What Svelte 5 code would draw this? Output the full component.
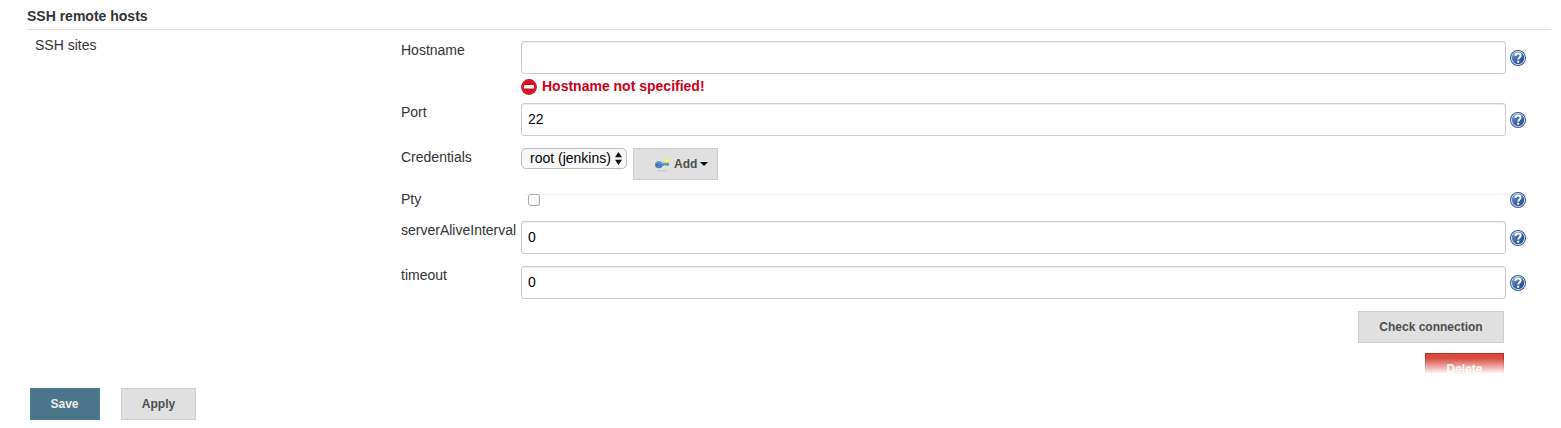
<script>
  let hostname = $state('');
  let port = $state('22');
  let interval = $state('0');
  let timeout = $state('0');
  let pty = $state(false);
</script>

{#snippet help()}
  <svg class="help" viewBox="0 0 16 16" role="img" aria-label="Help">
    <defs>
      <linearGradient id="help-blue" x1="0" y1="0" x2="1" y2="1">
        <stop offset="0" stop-color="#7f9fcd" />
        <stop offset="0.5" stop-color="#3f68a6" />
        <stop offset="1" stop-color="#1d4582" />
      </linearGradient>
    </defs>
    <circle cx="8" cy="8" r="8" fill="#30598f" />
    <circle cx="8" cy="8" r="7" fill="#e9f0f8" />
    <circle cx="8" cy="8" r="6.2" fill="url(#help-blue)" />
    <path d="M5.3 5.9C5.4 4.2 6.6 3.5 8.1 3.5c1.6 0 2.6.8 2.6 2.1 0 1.9-2.5 1.9-2.5 4" fill="none" stroke="#fff" stroke-width="1.9" />
    <rect x="7.1" y="10.7" width="2.1" height="2" fill="#fff" />
  </svg>
{/snippet}

<main>
  <h1>SSH remote hosts</h1>
  <div class="body">
    <div class="side">SSH sites</div>
    <div class="form">
      <div class="row host">
        <label for="hostname">Hostname</label>
        <div class="control">
          <input id="hostname" class="text" bind:value={hostname} />
          <div class="error">
            <svg width="16" height="16" viewBox="0 0 16 16">
              <circle cx="8" cy="8" r="7.9" fill="#b9101d" />
              <circle cx="8" cy="8" r="6.9" fill="#e62a37" />
              <circle cx="8" cy="8" r="6.2" fill="#df0a1b" />
              <rect x="3" y="6" width="10" height="3.6" rx=".5" fill="#fff" />
            </svg>
            <span>Hostname not specified!</span>
          </div>
        </div>
        {@render help()}
      </div>
      <div class="row port">
        <label for="port">Port</label>
        <input id="port" class="text" bind:value={port} />
        {@render help()}
      </div>
      <div class="row creds">
        <span class="label">Credentials</span>
        <div class="pick">
          <button class="select">
            <span>root (jenkins)</span>
            <svg width="7" height="13" viewBox="0 0 7 13"><path d="M0 5.3 3.5 0 7 5.3zM0 7.7h7L3.5 13z" fill="#111" /></svg>
          </button>
          <button class="btn add">
            <svg width="16" height="16" viewBox="0 0 16 16">
              <ellipse cx="8" cy="14.7" rx="5.5" ry=".8" fill="#cbcbcb" />
              <circle cx="12.6" cy="4.7" r="2.7" fill="#eee994" />
              <circle cx="12.6" cy="4.7" r="1.6" fill="#fff94a" />
              <path d="M7 6.8h7.6l.8 1.2-1.2 1.9h-1l-.8-.8-.9.8-.9-.8-1 .8H7z" fill="#5f8fc2" />
              <ellipse cx="4.8" cy="8.7" rx="3.8" ry="3.5" fill="#4a80bd" />
              <path d="M2.2 7.6c1-1.6 3.3-1.8 4.8-.3h7" fill="none" stroke="#7da9d6" stroke-width=".9" />
              <circle cx="2.9" cy="8.9" r=".8" fill="#315f94" />
            </svg>
            <span>Add</span>
            <svg class="caret" width="8" height="4" viewBox="0 0 8 4"><path d="M0 0h8L4 4z" fill="#000" /></svg>
          </button>
        </div>
      </div>
      <div class="row pty">
        <label for="pty">Pty</label>
        <div class="check"><input id="pty" type="checkbox" bind:checked={pty} /></div>
        {@render help()}
      </div>
      <div class="row field">
        <label for="interval">serverAliveInterval</label>
        <input id="interval" class="text" bind:value={interval} />
        {@render help()}
      </div>
      <div class="row field">
        <label for="timeout">timeout</label>
        <input id="timeout" class="text" bind:value={timeout} />
        {@render help()}
      </div>
      <div class="actions">
        <button class="btn connection">Check connection</button>
        <button class="btn delete">Delete</button>
      </div>
    </div>
  </div>
  <footer>
    <button class="btn save">Save</button>
    <button class="btn apply">Apply</button>
  </footer>
</main>

<style>
  :global(body) { background: #fff; }
  main {
    box-sizing: border-box;
    height: 428px;
    overflow: hidden;
    display: flex;
    flex-direction: column;
    font: 14px/18px "Liberation Sans", Helvetica, Arial, sans-serif;
    color: #333;
  }
  h1 {
    flex: none;
    box-sizing: border-box;
    height: 30px;
    margin: 0 10px 0 27px;
    padding-top: 7px;
    border-bottom: 1px solid #dcdcdc;
    font-size: 14px;
    line-height: 18px;
  }
  .body {
    position: relative;
    flex: none;
    height: 344px;
    overflow: hidden;
    display: grid;
    grid-template-columns: 366px 1125px;
    padding-left: 35px;
  }
  .body::after {
    content: "";
    position: absolute;
    inset: auto 0 0;
    height: 16px;
    background: linear-gradient(rgba(255, 255, 255, 0), #fff);
  }
  .side { padding-top: 6px; }
  .form { padding-top: 11px; }
  .row {
    display: grid;
    grid-template-columns: 120px 985px 16px;
    align-items: start;
  }
  .host { height: 62px; }
  .port, .field { height: 45px; }
  .creds { height: 42px; }
  .pty { height: 31px; }
  .row > label, .label { white-space: nowrap; }
  .help { width: 16px; height: 16px; margin: 9px 0 0 4px; }
  .text {
    box-sizing: border-box;
    display: block;
    width: 985px;
    height: 33px;
    margin: 0;
    padding: 0 6px 1px;
    border: 1px solid #ccc;
    border-radius: 3px;
    background: #fff;
    box-shadow: inset 0 1px 1px rgba(0, 0, 0, 0.075);
    font: inherit;
    color: #000;
    outline: 0;
  }
  .error {
    display: flex;
    align-items: center;
    gap: 5px;
    margin-top: 5px;
    height: 16px;
    color: #cc0018;
    font-weight: bold;
  }
  .error span { margin-top: -2px; }
  .pick { display: flex; align-items: flex-start; gap: 6px; }
  .select {
    box-sizing: border-box;
    display: flex;
    align-items: center;
    justify-content: space-between;
    width: 106px;
    height: 21px;
    padding: 0 4px 0 8px;
    border: 1px solid #bdbdbd;
    border-radius: 5px;
    background: linear-gradient(#f5f5f5, #fafafa);
    font: 14px/18px "Liberation Sans", Helvetica, Arial, sans-serif;
    color: #000;
    white-space: nowrap;
  }
  .select span { margin-top: -2px; }
  .select svg { flex: none; }
  .btn {
    box-sizing: border-box;
    display: flex;
    align-items: center;
    justify-content: center;
    height: 32px;
    margin: 0;
    padding: 0;
    border: 1px solid #ccc;
    background: #e0e0e0;
    color: #4d4d4d;
    font: bold 12px/16px "Liberation Sans", Helvetica, Arial, sans-serif;
  }
  .add { width: 85px; justify-content: flex-start; padding-left: 20px; }
  .add span { margin-left: 4px; }
  .caret { margin: 0 0 1px 3px; }
  .check {
    height: 12px;
    margin: 4px 0 0 4px;
    border-top: 1px solid #f0f0f0;
    width: 985px;
    display: flex;
  }
  .check input {
    appearance: none;
    box-sizing: border-box;
    width: 12px;
    height: 12px;
    margin: -1px 0 0 3px;
    border: 1px solid #a6a6a6;
    border-radius: 3px;
    background: #fff;
  }
  .pty .help { margin-top: 2px; }
  .actions {
    display: flex;
    flex-direction: column;
    align-items: flex-end;
    gap: 10px;
    width: 1103px;
  }
  .connection { width: 146px; }
  .delete {
    width: 79px;
    border-color: #b83226;
    background: #d9483b;
    color: #eee;
  }
  footer { display: flex; gap: 21px; padding: 14px 30px 0; }
  .save {
    width: 70px;
    padding-right: 1px;
    border-color: #44808f;
    background: #4b758b;
    color: #eee;
  }
  .apply { width: 75px; }
</style>
